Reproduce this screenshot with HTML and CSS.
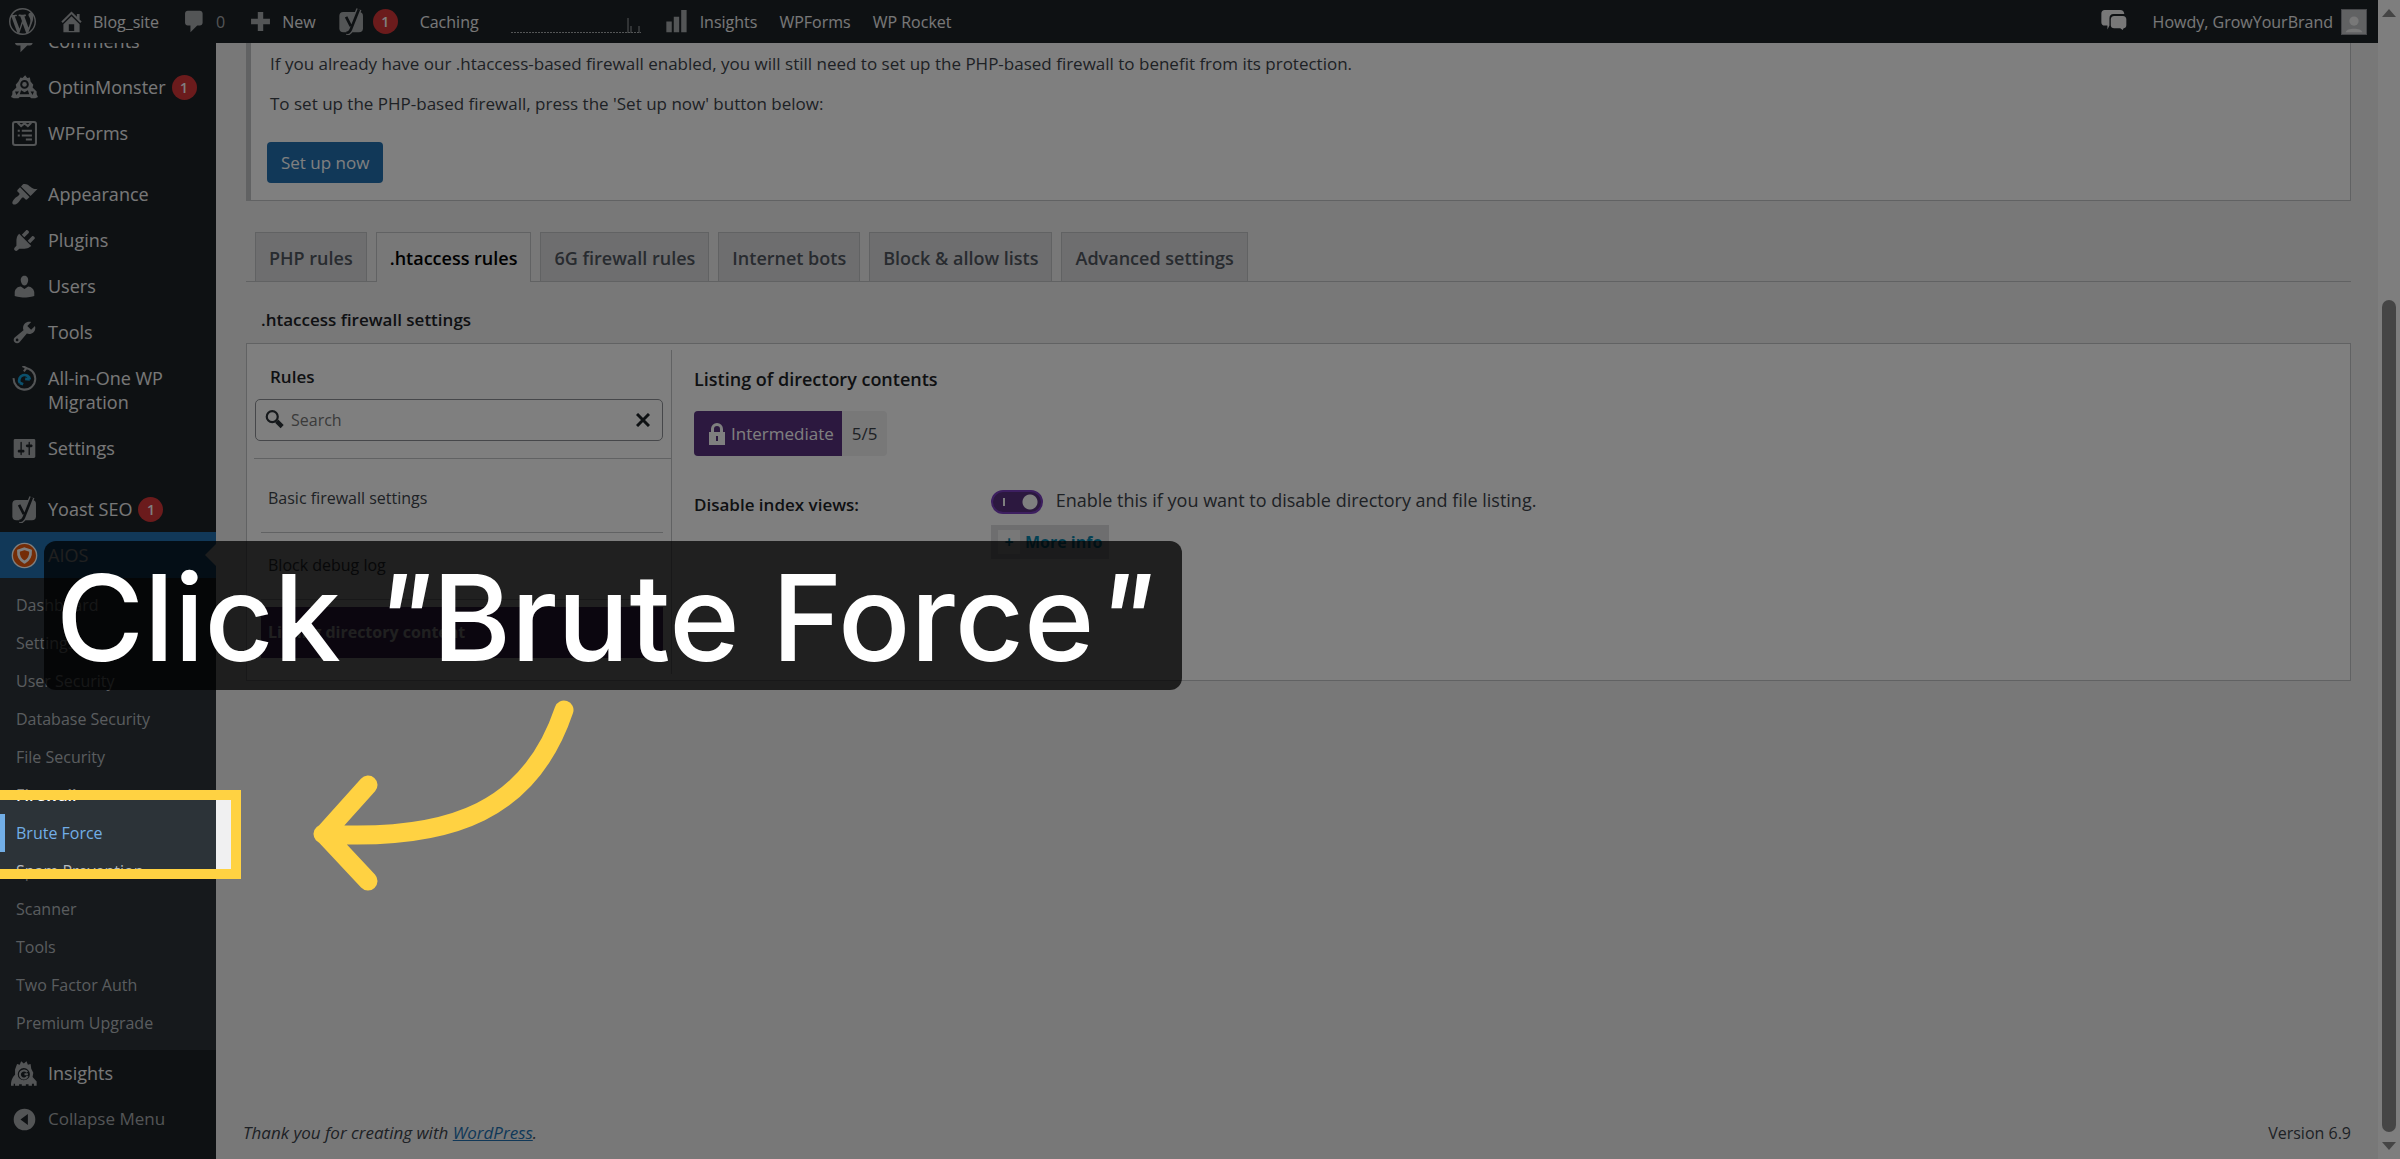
FILE: index.html
```html
<!DOCTYPE html>
<html lang="en">
<head>
  <meta charset="UTF-8" />
  <meta name="viewport" content="width=device-width, initial-scale=1.0" />
  <title>Firewall - AIOS - Blog_site</title>
  <link rel="stylesheet" href="styles.css">
</head>
<body>

  <!-- Admin bar -->
  <header class="adminbar">
    <a href="#" class="bar-item" aria-label="About WordPress">
      <svg class="bar-icon" viewBox="0 0 20 20"><path d="M20 10c0-5.51-4.49-10-10-10C4.48 0 0 4.49 0 10c0 5.52 4.48 10 10 10 5.51 0 10-4.48 10-10zM7.78 15.37L4.37 6.22c.55-.02 1.17-.08 1.17-.08.5-.06.44-1.13-.06-1.11 0 0-1.45.11-2.37.11-.18 0-.37 0-.58-.01C4.12 2.69 6.87 1.11 10 1.11c2.33 0 4.45.87 6.05 2.34-.68-.11-1.65.39-1.65 1.58 0 .74.45 1.36.9 2.1.35.61.55 1.36.55 2.46 0 1.49-1.4 5-1.4 5l-3.03-8.37c.54-.02.82-.17.82-.17.5-.05.44-1.25-.06-1.22 0 0-1.44.12-2.38.12-.87 0-2.33-.12-2.33-.12-.5-.03-.56 1.2-.06 1.22l.92.08 1.26 3.41zM17.41 10c.24-.64.74-1.87.43-4.25.7 1.29 1.05 2.71 1.05 4.25 0 3.29-1.73 6.24-4.4 7.78.97-2.59 1.94-5.2 2.92-7.78zM6.1 18.09C3.12 16.65 1.11 13.53 1.11 10c0-1.3.23-2.48.72-3.59C3.25 10.3 4.67 14.2 6.1 18.09zm4.03-6.63l2.58 6.98c-.86.29-1.76.45-2.71.45-.79 0-1.57-.11-2.29-.33.81-2.38 1.62-4.74 2.42-7.1z"/></svg>
    </a>
    <a href="#" class="bar-item">
      <svg class="bar-icon" viewBox="0 0 20 20"><path d="M16 8.5l1.53 1.53-1.06 1.06L10 4.6l-6.47 6.49-1.06-1.06L10 2.5l4 4v-2h2v4zm-6-2.46l6 5.99V18H4v-5.97zM12 17v-5H8v5h4z"/></svg>
      Blog_site
    </a>
    <a href="#" class="bar-item muted">
      <svg class="bar-icon" viewBox="0 0 20 20"><path d="M5 2h9c1.100 0 2 .9 2 2v7c0 1.100-.9 2-2 2h-2l-5 5v-5H5c-1.100 0-2-.9-2-2V4c0-1.100.9-2 2-2z"/></svg>
      0
    </a>
    <a href="#" class="bar-item">
      <svg class="bar-icon" viewBox="0 0 20 20"><path d="M17 8v4h-5v5H8v-5H3V8h5V3h4v5z"/></svg>
      New
    </a>
    <a href="#" class="bar-item" aria-label="SEO, 1 notification">
      <svg class="bar-icon" viewBox="0 0 20 20"><rect x="1" y="3" width="17.500" height="15" rx="3"/><path class="seo-edge" d="M15.500 1L9.500 16Q8.500 18.500 6 18.500"/><path class="seo-mark" d="M6 6.500l3.500 7M15.500 1L9.500 16Q8.500 18.500 6 18.500"/></svg>
      <span class="badge">1</span>
    </a>
    <a href="#" class="bar-item">Caching</a>
    <a href="#" class="bar-item spark-item" aria-label="Site stats">
      <svg class="spark" viewBox="0 0 130 24"><path d="M0 22.500H130" stroke-dasharray="2 1"/><path d="M117 23V8M120 23V16M128 23V16"/></svg>
    </a>
    <a href="#" class="bar-item">
      <svg class="bar-icon" viewBox="0 0 20 20"><path d="M1 10h4v8H1zM6.500 6.500h4V18h-4zM12 1.500h4V18h-4z"/></svg>
      Insights
    </a>
    <a href="#" class="bar-item">WPForms</a>
    <a href="#" class="bar-item">WP Rocket</a>
    <a href="#" class="bar-item bar-right" aria-label="Notes">
      <svg class="bar-icon chat" viewBox="0 0 20 20"><path d="M3.500 1.500h11.500c1.800 0 2.800 1 3 3H10C8 4.500 7 5.700 7 7.700V13l-1.500 3v-3h-2C2 13 1 12 1 10.500V4c0-1.500 1-2.500 2.500-2.500z"/><path d="M10.500 6H17c1.500 0 2.500 1 2.500 2.300v4.400c0 1.300-1 2.300-2 2.300l-.7 1.300L15 15h-4.500C9 15 8 14 8 12.700V8.300C8 7 9 6 10.500 6z"/></svg>
    </a>
    <a href="#" class="bar-item">
      Howdy, GrowYourBrand
      <svg class="avatar" viewBox="0 0 26 26"><path class="avatar-bg" d="M0 0h26v26H0z"/><circle cx="13" cy="12" r="5"/><path d="M4 24c1-5 17-5 18 0z"/></svg>
    </a>
  </header>

  <div class="layout">

    <!-- Side menu -->
    <nav class="sidebar">
      <ul class="menu">
        <li><a href="#" class="menu-link"><svg class="menu-icon" viewBox="0 0 20 20"><path d="M5 2h9c1.100 0 2 .9 2 2v7c0 1.100-.9 2-2 2h-2l-5 5v-5H5c-1.100 0-2-.9-2-2V4c0-1.100.9-2 2-2z"/></svg>Comments</a></li>
        <li><a href="#" class="menu-link"><svg class="menu-icon" viewBox="0 0 20 20"><path fill-rule="evenodd" d="M7 2.500l1.500.5L10.500 1l1.500 2 2-.5.500 3L16.500 8l-.5 2 3 3v2l1 2-2 1h-3l-1-1H6.500l-1 1H2l-2-1 1-2v-2l3-3-.5-2L5.500 5.500zM10 4.500a3.200 3.200 0 1 0 0 6.400 3.200 3.200 0 0 0 0-6.400zM3 13l1 2.500L6 13zM7.500 12l-1 3h7l-1-3-2.500 1.500zM14.500 13l1.500 2.500 1-2.500z"/><circle cx="10" cy="7.700" r="1.700"/></svg>OptinMonster<span class="badge">1</span></a></li>
        <li><a href="#" class="menu-link"><svg class="menu-icon" viewBox="0 0 20 20"><rect class="line" x="1.500" y="1.500" width="17" height="17" rx="1.500"/><path class="line" d="M5 2l2.500 2.500L10 2.500l2.500 2L15 2M5 8h1.500M8 8h7.500M5 11.500h1.500M8 11.500h7.500M11 14.500h4.500"/></svg>WPForms</a></li>
        <li class="separator"></li>
        <li><a href="#" class="menu-link"><svg class="menu-icon" viewBox="0 0 20 20"><path d="M14.480 11.060L7.410 3.990l1.500-1.500c.5-.56 2.300-.47 3.510.32 1.210.8 1.430 1.280 2.910 2.100 1.180.64 2.450 1.260 4.450.85zm-.71.71L6.700 4.700 4.930 6.470c-.39.39-.39 1.020 0 1.410l1.060 1.060c.39.39.39 1.030 0 1.420-.6.6-1.430 1.110-2.210 1.690-.35.26-.7.53-1.010.84C1.430 14.230.4 16.080 1.400 17.070c.99 1 2.840-.03 4.180-1.360.31-.31.58-.66.85-1.020.57-.78 1.080-1.610 1.690-2.210.39-.39 1.020-.39 1.410 0l1.060 1.060c.39.39 1.020.39 1.410 0z"/></svg>Appearance</a></li>
        <li><a href="#" class="menu-link"><svg class="menu-icon" viewBox="0 0 20 20"><path d="M13.110 4.360L9.870 7.600 8 5.730l3.240-3.240c.35-.34 1.050-.2 1.560.32.52.51.66 1.210.31 1.550zm-8 1.770l.91-1.120 9.010 9.010-1.190.84c-.71.71-2.630 1.160-3.820 1.160H6.140L4.900 17.260c-.59.59-1.540.59-2.120 0-.59-.58-.59-1.530 0-2.120l1.240-1.240v-3.880c0-1.130.4-3.190 1.090-3.890zm7.260 3.970l3.240-3.240c.34-.35 1.040-.21 1.550.31.52.51.66 1.210.31 1.550l-3.240 3.250z"/></svg>Plugins</a></li>
        <li><a href="#" class="menu-link"><svg class="menu-icon" viewBox="0 0 20 20"><path d="M10 9.250c-2.270 0-2.730-3.440-2.730-3.440C7 4.020 7.820 2 9.970 2c2.160 0 2.980 2.020 2.710 3.810 0 0-.41 3.440-2.680 3.440zm0 2.570L12.720 10c2.390 0 4.520 2.330 4.520 4.530v2.490s-3.650 1.130-7.240 1.130c-3.650 0-7.240-1.130-7.240-1.130v-2.490c0-2.250 1.940-4.480 4.470-4.480z"/></svg>Users</a></li>
        <li><a href="#" class="menu-link"><svg class="menu-icon" viewBox="0 0 20 20"><path d="M16.680 9.770c-1.340 1.340-3.300 1.670-4.950.99l-5.410 6.520c-.99.99-2.590.99-3.580 0s-.99-2.590 0-3.570l6.520-5.420c-.68-1.650-.35-3.610.99-4.950 1.280-1.280 3.120-1.620 4.720-1.060l-2.890 2.890 2.820 2.820 2.860-2.870c.53 1.580.18 3.390-1.080 4.650zM3.810 16.210c.4.39 1.040.39 1.430 0 .4-.4.4-1.040 0-1.430-.39-.4-1.030-.4-1.430 0-.39.39-.39 1.030 0 1.430z"/></svg>Tools</a></li>
        <li><a href="#" class="menu-link two-line"><svg class="menu-icon" viewBox="0 0 20 20"><path class="line" d="M2 9a8 8 0 1 0 8-7.500M8.500 0l3 1.500L9.500 4"/><path class="line thick cyan" d="M6.500 12.500a4 4 0 1 1 7.500-2.500M14 10l-3.500-.5M6.500 12.500L9 13.500"/></svg>All-in-One WP Migration</a></li>
        <li><a href="#" class="menu-link"><svg class="menu-icon" viewBox="0 0 20 20"><path d="M18 16V4c0-.55-.45-1-1-1H3c-.55 0-1 .45-1 1v12c0 .55.45 1 1 1h14c.55 0 1-.45 1-1zM8 11h1c.55 0 1 .45 1 1s-.45 1-1 1H8v1.500c0 .28-.22.5-.5.5s-.5-.22-.5-.5V13H6c-.55 0-1-.45-1-1s.45-1 1-1h1V5.500c0-.28.22-.5.5-.5s.5.22.5.5V11zm5-2h-1c-.55 0-1-.45-1-1s.45-1 1-1h1V5.500c0-.28.22-.5.5-.5s.5.22.5.5V7h1c.55 0 1 .45 1 1s-.45 1-1 1h-1v5.500c0 .28-.22.5-.5.5s-.5-.22-.5-.5V9z"/></svg>Settings</a></li>
        <li class="separator"></li>
        <li><a href="#" class="menu-link"><svg class="menu-icon" viewBox="0 0 20 20"><rect x="1" y="3" width="17.500" height="15" rx="3"/><path class="seo-edge" d="M15.500 1L9.500 16Q8.500 18.500 6 18.500"/><path class="seo-mark" d="M6 6.500l3.500 7M15.500 1L9.500 16Q8.500 18.500 6 18.500"/></svg>Yoast SEO<span class="badge">1</span></a></li>
        <li class="current">
          <a href="#" class="menu-link"><svg class="menu-icon aios" viewBox="0 0 20 20"><circle cx="10" cy="10" r="9"/><path d="M10 5l4.500 1.500c.3 4-1 6.500-4.500 8.500-3.500-2-4.800-4.500-4.500-8.500z"/></svg>AIOS</a>
          <ul class="submenu">
            <li><a href="#">Dashboard</a></li>
            <li><a href="#">Settings</a></li>
            <li><a href="#">User Security</a></li>
            <li><a href="#">Database Security</a></li>
            <li><a href="#">File Security</a></li>
            <li><a href="#" class="selected">Firewall</a></li>
            <li><a href="#" class="hovered">Brute Force</a></li>
            <li><a href="#">Spam Prevention</a></li>
            <li><a href="#">Scanner</a></li>
            <li><a href="#">Tools</a></li>
            <li><a href="#">Two Factor Auth</a></li>
            <li><a href="#">Premium Upgrade</a></li>
          </ul>
        </li>
        <li><a href="#" class="menu-link"><svg class="menu-icon" viewBox="0 0 20 20"><path fill-rule="evenodd" d="M4.500 3l2 .5 1-2.500 2 1.500 2-1.500 1 2.500 2-.5.5 3.500 1.500 3-.5 3 3 3.500v3h-2v-1.500h-1.500V19H13v-1h-2v1H8v-1H6v1H3v-1.500H2V19H0c0-4 1-6 3-8V7zM9.500 6a4.500 4.500 0 1 0 0 9 4.500 4.500 0 0 0 0-9z"/><path class="line" d="M12 9a3 3 0 1 0 .3 3M10 10.500h2.500"/></svg>Insights</a></li>
        <li><button type="button" class="menu-link collapse"><svg class="menu-icon" viewBox="0 0 20 20"><path fill-rule="evenodd" d="M10 2a8 8 0 1 1 0 16 8 8 0 0 1 0-16zM12.500 6L7 10l5.500 4z"/></svg>Collapse Menu</button></li>
      </ul>
    </nav>

    <!-- Firewall page -->
    <main class="content">
      <section class="notice">
        <p>If you already have our .htaccess-based firewall enabled, you will still need to set up the PHP-based firewall to benefit from its protection.</p>
        <p>To set up the PHP-based firewall, press the 'Set up now' button below:</p>
        <button type="button" class="primary">Set up now</button>
      </section>

      <nav class="tabs">
        <a href="#">PHP rules</a>
        <a href="#" class="active">.htaccess rules</a>
        <a href="#">6G firewall rules</a>
        <a href="#">Internet bots</a>
        <a href="#">Block &amp; allow lists</a>
        <a href="#">Advanced settings</a>
      </nav>

      <h2 class="section-title">.htaccess firewall settings</h2>

      <section class="panel">
        <div class="rules">
          <div class="rules-head">
            <h3><label for="rule-search">Rules</label></h3>
            <div class="search">
              <svg class="search-icon" viewBox="0 0 20 20"><circle cx="7.500" cy="7" r="5"/><path class="handle" d="M11.500 11l5 5"/></svg>
              <input type="text" id="rule-search" placeholder="Search">
              <button type="button" aria-label="Clear search"><svg viewBox="0 0 14 14"><path d="M1 1l12 12M13 1L1 13"/></svg></button>
            </div>
          </div>
          <ul class="rule-list">
            <li><a href="#">Basic firewall settings</a></li>
            <li><a href="#">Block debug log</a></li>
            <li><a href="#" class="active">Listing directory content</a></li>
          </ul>
        </div>

        <div class="rule-detail">
          <h3>Listing of directory contents</h3>
          <div class="level">
            <span class="level-name"><svg viewBox="0 0 18 24"><path fill-rule="evenodd" d="M1 10h2V7a6 6 0 0 1 12 0v3h2v13H1zm5 0h6V7a3 3 0 0 0-6 0zm2 4v5h2v-5z"/></svg>Intermediate</span>
            <span class="level-score">5/5</span>
          </div>
          <div class="setting">
            <span class="setting-name">Disable index views:</span>
            <div class="setting-value">
              <input type="checkbox" class="toggle" id="disable-index" checked>
              <label for="disable-index">Enable this if you want to disable directory and file listing.</label>
              <button type="button" class="more-info"><span class="plus">+</span>More info</button>
            </div>
          </div>
        </div>
      </section>

      <footer class="footer">
        <em>Thank you for creating with <a href="#">WordPress</a>.</em>
        <span>Version 6.9</span>
      </footer>
    </main>

  </div>

  <div class="scrollbar">
    <svg viewBox="0 0 14 8"><path d="M0 8l7-8 7 8z"/></svg>
    <div class="thumb"></div>
    <svg viewBox="0 0 14 8"><path d="M0 0h14L7 8z"/></svg>
  </div>

  <!-- Tutorial step -->
  <div class="spotlight"></div>
  <div class="step-text">Click <i>"</i>Brute Force<i>"</i></div>
  <svg class="step-arrow" viewBox="0 0 270 200"><path d="M255 16C222 114 146 148 14 140M59 91L15 140l44 47"/></svg>

</body>
</html>
```
FILE: styles.css
```css
* {
  box-sizing: border-box;
}
body {
  margin: 0;
  height: 100vh;
  overflow: hidden;
  position: relative;
  display: grid;
  grid-template-columns: 1fr 22px;
  grid-template-rows: 43px 1fr;
  background: #f0f0f1;
  color: #3c434a;
  font-family: "Open Sans", "Noto Sans", sans-serif;
  font-size: 16px;
}
a {
  color: inherit;
  text-decoration: none;
}
ul {
  list-style: none;
  margin: 0;
  padding: 0;
}
h2, h3, p {
  margin: 0;
}
button, input {
  font: inherit;
}

/* admin bar */
.adminbar {
  display: flex;
  align-items: center;
  gap: 22px;
  padding: 0 11px 0 9px;
  background: #1d2327;
  color: #f0f0f1;
}
.bar-item {
  display: flex;
  align-items: center;
  gap: 8px;
}
.bar-item.muted {
  color: #a7aaad;
}
.bar-icon {
  width: 27px;
  height: 27px;
  fill: #a7aaad;
}
.bar-icon.chat {
  fill: #f0f0f1;
}
.spark-item {
  padding: 0 2px 0 10px;
}
.spark {
  width: 130px;
  height: 24px;
  stroke: #a7aaad;
  fill: none;
}
.bar-right {
  margin-left: auto;
  padding-right: 4px;
}
.avatar {
  width: 26px;
  height: 26px;
  fill: #f0f0f1;
  border: 1px solid #8c8f94;
}
.avatar-bg {
  fill: #c3c4c7;
}
.seo-edge {
  fill: none;
  stroke: #a7aaad;
  stroke-width: 4;
}
.seo-mark {
  fill: none;
  stroke: #1d2327;
  stroke-width: 2;
}
.badge {
  min-width: 25px;
  height: 25px;
  border-radius: 13px;
  background: #d63638;
  color: #fff;
  font-size: 14px;
  font-weight: 600;
  line-height: 25px;
  text-align: center;
}

.layout {
  display: flex;
  min-height: 0;
}

/* side menu */
.sidebar {
  width: 216px;
  flex: none;
  overflow: hidden;
  background: #1d2327;
  color: #f0f0f1;
}
.menu {
  margin-top: -25px;
}
.menu-link {
  display: flex;
  align-items: center;
  gap: 10px;
  min-height: 46px;
  padding: 0 10px 0 11px;
  font-size: 18px;
  line-height: 24px;
}
.menu-link .badge {
  margin-left: -4px;
}
.menu-link.two-line {
  min-height: 70px;
  align-items: flex-start;
  padding-top: 11px;
}
.menu-link.collapse {
  width: 100%;
  border: 0;
  background: none;
  color: #a7aaad;
  font-size: 17px;
  text-align: left;
}
.menu-icon {
  width: 27px;
  height: 27px;
  flex: none;
  fill: #a7aaad;
}
.menu-icon .line {
  fill: none;
  stroke: #a7aaad;
  stroke-width: 1.5;
}
.menu-icon .thick {
  stroke-width: 2;
}
.menu-icon .cyan {
  stroke: #16a0d8;
}
.menu-icon.aios {
  fill: #e8590c;
  stroke: #fff;
}
.menu-icon.aios path {
  stroke-width: 2;
}
.separator {
  height: 15px;
}
.current > .menu-link {
  position: relative;
  background: #2271b1;
  color: #fff;
}
.current > .menu-link::after {
  content: "";
  position: absolute;
  right: 0;
  top: 12px;
  border: 11px solid transparent;
  border-left: 0;
  border-right-color: #f0f0f1;
}
.submenu {
  padding: 8px 0;
  background: #2c3338;
}
.submenu a {
  display: block;
  padding-left: 16px;
  line-height: 38px;
  color: #b4b9be;
}
.submenu a.selected {
  color: #fff;
  font-weight: 600;
}
.submenu a.hovered {
  color: #72aee6;
  box-shadow: inset 5px 0 0 #72aee6;
}

/* page */
.content {
  flex: 1;
  min-width: 0;
  display: flex;
  flex-direction: column;
  padding: 0 27px 11px 30px;
}
.notice {
  padding: 9px 16px 17px;
  background: #fff;
  border: 1px solid #c3c4c7;
  border-top: 0;
  border-left-width: 5px;
  font-size: 17px;
}
.notice p {
  padding-left: 3px;
  line-height: 24px;
  margin-bottom: 16px;
}
.primary {
  display: block;
  height: 41px;
  margin-top: 26px;
  padding: 0 14px;
  border: 0;
  border-radius: 4px;
  background: #2271b1;
  color: #fff;
}
.tabs {
  display: flex;
  gap: 9px;
  margin-top: 31px;
  padding-left: 9px;
  border-bottom: 1px solid #c3c4c7;
}
.tabs a {
  padding: 13px 13px 11px;
  border: 1px solid #c3c4c7;
  border-bottom: 0;
  background: #dcdcde;
  color: #50575e;
  font-size: 18px;
  font-weight: 600;
  line-height: 24px;
}
.tabs a.active {
  margin-bottom: -1px;
  background: #f0f0f1;
  color: #000;
}
.section-title {
  margin: 26px 0 11px 15px;
  color: #1d2327;
  font-size: 17px;
  font-weight: 600;
  line-height: 24px;
}
.panel {
  display: flex;
  padding: 6px 0;
  background: #fff;
  border: 1px solid #c3c4c7;
}
.rules {
  width: 425px;
  border-right: 1px solid #c3c4c7;
}
.rules-head {
  margin-left: 7px;
  padding-bottom: 17px;
  border-bottom: 1px solid #c3c4c7;
}
.rules h3, .rule-detail h3 {
  color: #1d2327;
  font-size: 17px;
  font-weight: 600;
  line-height: 24px;
}
.rules h3 {
  padding: 15px 0 10px 16px;
}
.search {
  display: flex;
  align-items: center;
  height: 42px;
  margin: 0 8px 0 1px;
  padding: 0 8px;
  border: 1px solid #8c8f94;
  border-radius: 5px;
}
.search-icon {
  width: 22px;
  height: 22px;
  fill: none;
  stroke: #2c3338;
  stroke-width: 2;
}
.search-icon .handle {
  stroke-width: 4;
}
.search input {
  flex: 1;
  min-width: 0;
  border: 0;
  background: none;
  padding: 0 5px;
}
.search input::placeholder {
  color: #757575;
  opacity: 1;
}
.search button {
  display: flex;
  border: 0;
  padding: 4px;
  background: none;
}
.search button svg {
  width: 14px;
  height: 14px;
  stroke: #1d2327;
  stroke-width: 3;
}
.rule-list {
  margin: 7px 8px 8px 14px;
}
.rule-list li {
  padding: 7px 0 8px;
  border-bottom: 1px solid #c3c4c7;
}
.rule-list li:last-child {
  border: 0;
}
.rule-list a {
  display: block;
  padding-left: 7px;
  line-height: 51px;
}
.rule-list a.active {
  background: #58307f;
  color: #fff;
  font-weight: 700;
}
.rule-detail {
  flex: 1;
  padding: 17px 22px;
}
.rule-detail h3 {
  font-size: 18px;
}
.level {
  display: flex;
  width: fit-content;
  margin: 20px 0 30px;
  border-radius: 4px;
  overflow: hidden;
  background: #f0f0f1;
  font-size: 17px;
  line-height: 45px;
}
.level-name {
  display: flex;
  align-items: center;
  gap: 5px;
  padding: 0 8px 0 14px;
  background: #58307f;
  color: #fff;
}
.level-name svg {
  width: 18px;
  height: 24px;
  fill: #fff;
}
.level-score {
  padding: 0 10px;
}
.setting {
  display: flex;
  font-size: 18px;
  line-height: 24px;
}
.setting-name {
  width: 297px;
  padding-top: 7px;
  color: #1d2327;
  font-size: 17px;
  font-weight: 600;
}
.setting-value {
  padding-top: 2px;
}
.setting-value label {
  margin-left: 8px;
}
.toggle {
  appearance: none;
  width: 52px;
  height: 24px;
  margin: 0;
  border-radius: 12px;
  vertical-align: middle;
  border: 2px solid #7b3fc0;
  background:
    radial-gradient(circle at 37px 10px, #fff 7px, transparent 8px),
    linear-gradient(#fff, #fff) 10px 6px / 2px 8px no-repeat,
    #58307f;
}
.more-info {
  display: flex;
  align-items: center;
  gap: 5px;
  margin-top: 11px;
  height: 34px;
  padding: 0 7px;
  border: 0;
  background: #dcdcde;
  color: #0783a8;
  font-size: 16px;
  font-weight: 700;
}
.plus {
  width: 22px;
  line-height: 24px;
  background: #f0f0f1;
}
.footer {
  display: flex;
  justify-content: space-between;
  margin: auto 0 0 -3px;
  line-height: 30px;
}
.footer em {
  font-size: 17px;
}
.footer a {
  color: #2271b1;
  text-decoration: underline;
}

/* window scrollbar */
.scrollbar {
  grid-column: 2;
  grid-row: 1 / 3;
  display: flex;
  flex-direction: column;
  align-items: center;
  gap: 10px;
  padding: 9px 0;
  background: #fcfcfc;
}
.scrollbar svg {
  width: 14px;
  height: 8px;
  fill: #8b8b8b;
}
.thumb {
  flex: 1;
  width: 14px;
  margin-top: 273px;
  border-radius: 7px;
  background: #8b8b8b;
}

/* tutorial overlay */
.spotlight {
  position: absolute;
  left: -10px;
  top: 790px;
  width: 251px;
  height: 89px;
  border: 10px solid #ffd242;
  box-shadow: 0 0 0 3000px rgba(0, 0, 0, 0.5);
}
.step-text {
  position: absolute;
  left: 44px;
  top: 541px;
  padding: 5px 28px 0 12px;
  border-radius: 12px;
  background: rgba(0, 0, 0, 0.75);
  color: #fff;
  font-family: Inter, sans-serif;
  font-size: 120px;
  font-weight: 500;
  line-height: 144px;
  white-space: nowrap;
}
.step-arrow {
  position: absolute;
  left: 309px;
  top: 694px;
  width: 270px;
  height: 200px;
  fill: none;
  stroke: #ffd242;
  stroke-width: 19;
  stroke-linecap: round;
  stroke-linejoin: round;
}
```
